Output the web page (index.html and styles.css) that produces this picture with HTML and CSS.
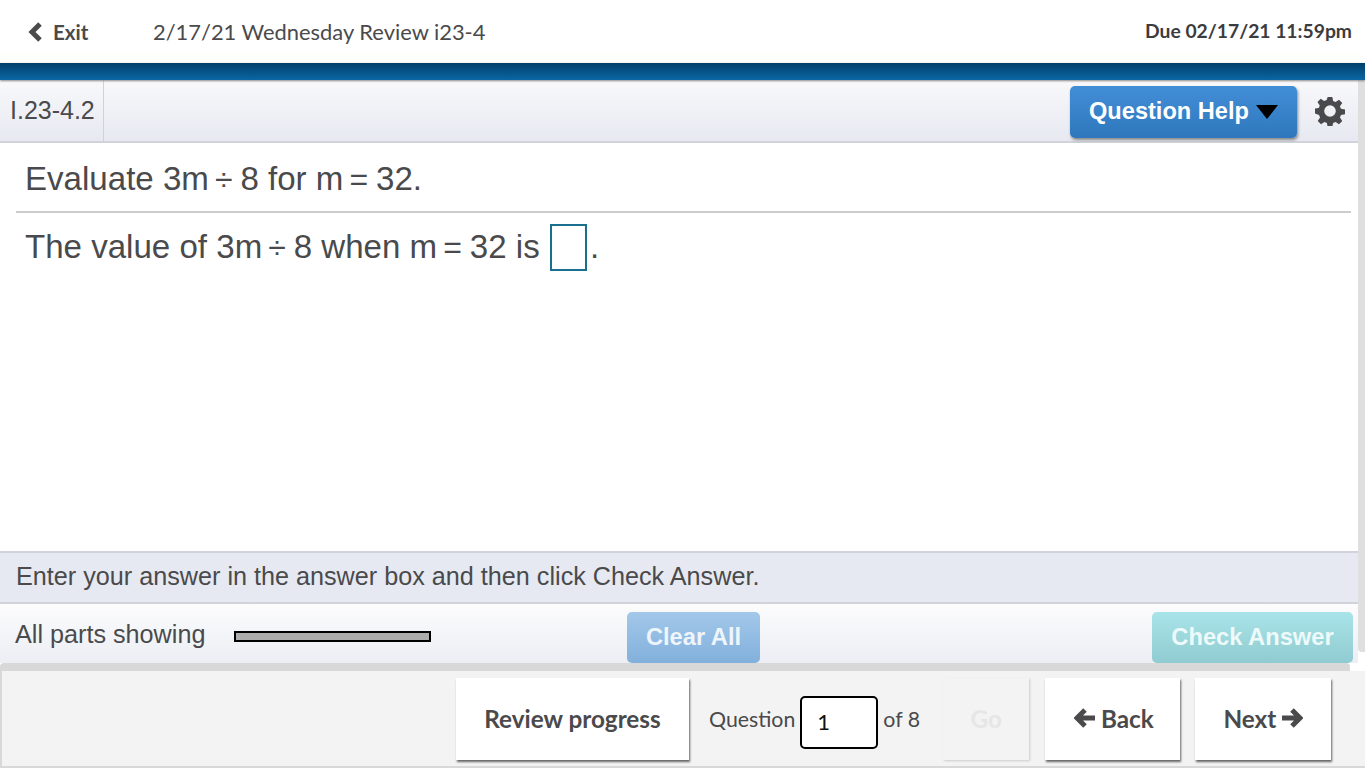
FILE: index.html
```html
<!DOCTYPE html>
<html lang="en">
<head>
<meta charset="utf-8">
<title>2/17/21 Wednesday Review i23-4</title>
<link rel="stylesheet" href="styles.css">
</head>
<body>
<div class="page">
  <header class="topbar">
    <a class="exit">
      <svg class="chev" viewBox="0 0 14 20" width="14" height="20"><path d="M12 2 4 10l8 8" fill="none" stroke="#4a4a4c" stroke-width="5"/></svg>
      <span>Exit</span>
    </a>
    <div class="title">2/17/21 Wednesday Review i23-4</div>
    <div class="due">Due 02/17/21 11:59pm</div>
  </header>
  <div class="band"></div>
  <div class="workspace">
    <div class="content">
      <div class="toolbar">
        <div class="qid">I.23-4.2</div>
        <button class="help">Question Help<span class="caret"></span></button>
        <svg class="gear" viewBox="0 0 32 32" width="30" height="30"><path fill="#4a4a4c" fill-rule="evenodd" d="M13.500 1h5l.8 4.300 2.700 1.100 3.600-2.500 3.500 3.500-2.500 3.600 1.100 2.700 4.300.8v5l-4.300.8-1.100 2.700 2.500 3.600-3.500 3.500-3.600-2.500-2.700 1.100-.8 4.300h-5l-.8-4.300-2.700-1.100-3.600 2.500-3.500-3.500 2.500-3.600-1.100-2.700L-.3 18.500v-5l4.300-.8 1.100-2.700-2.500-3.600 3.500-3.500 3.600 2.500 2.700-1.100zM16 9.800a6.200 6.200 0 1 0 0 12.400 6.200 6.200 0 0 0 0-12.400z"/></svg>
      </div>
      <main class="question">
        <p class="prompt">Evaluate 3m<span class="op">÷</span>8 for m<span class="op">=</span>32.</p>
        <p class="answer">The value of 3m<span class="op">÷</span>8 when m<span class="op">=</span>32 is <span class="box"></span>.</p>
      </main>
      <div class="hint">Enter your answer in the answer box and then click Check Answer.</div>
      <div class="controls">
        <div class="parts">All parts showing</div>
        <div class="progress"></div>
        <button class="clear">Clear All</button>
        <button class="check">Check Answer</button>
      </div>
    </div>
    <div class="scroll"></div>
  </div>
  <div class="strip"></div>
  <footer class="footer">
    <button class="nav review">Review progress</button>
    <span class="qlabel">Question</span>
    <div class="qinput">1</div>
    <span class="qof">of 8</span>
    <button class="nav go">Go</button>
    <button class="nav back"><svg viewBox="0 0 21 20" width="21" height="20"><path d="M11 2 3 10l8 8M5 10h16" fill="none" stroke="#4a4a4c" stroke-width="5"/></svg>Back</button>
    <button class="nav next">Next<svg viewBox="0 0 21 20" width="21" height="20"><path d="M10 2l8 8-8 8M16 10H0" fill="none" stroke="#4a4a4c" stroke-width="5"/></svg></button>
  </footer>
</div>
</body>
</html>
```
FILE: styles.css
```css
* { box-sizing: border-box; }
html, body { margin: 0; padding: 0; }
body { background: #fff; font-family: "Liberation Sans", Arial, sans-serif; color: #4a4a4c; overflow: hidden; }
button { font: inherit; border: 0; cursor: pointer; }
p { margin: 0; }
.page { width: 1365px; height: 768px; display: flex; flex-direction: column; }

.topbar { height: 63px; display: flex; align-items: center; padding: 0 13px 0 28px; font-family: Lato, sans-serif; background: linear-gradient(#fff 80%, #fdfdfa); }
.exit { display: flex; align-items: center; gap: 11px; font-size: 20.500px; font-weight: 700; width: 125px; }
.chev { display: block; }
.title { font-size: 21.900px; flex: 1; padding-bottom: 1px; }
.due { font-size: 19.300px; font-weight: 700; color: #3c3c3e; padding-bottom: 2px; }
.band { height: 17px; background: linear-gradient(#003f6b, #0a67a4); box-shadow: 0 1px 2px #888; position: relative; }

.workspace { height: 583px; display: flex; align-items: stretch; }
.content { width: 1358px; display: flex; flex-direction: column; }
.scroll { width: 7px; height: 572px; background: #dfdfdf; border-radius: 0 0 0 4px; }

.toolbar { height: 63px; flex: none; display: flex; align-items: flex-start; padding-right: 13px; background: linear-gradient(#f9f9fb, #e6e9f1); border-bottom: 2px solid #d0d3da; }
.qid { height: 61px; width: 104px; padding-left: 10px; line-height: 61px; font-size: 25px; border-right: 1px solid #d0d2d8; margin-right: auto; }
.help { width: 227px; height: 52px; margin-top: 6px; background: linear-gradient(#428ed6, #2e77bd); color: #fff; font-weight: 700; font-size: 23.600px; border-radius: 5px; box-shadow: 1px 2px 3px #888; display: flex; align-items: center; padding: 0 0 2px 19px; }
.caret { width: 0; height: 0; border-left: 11px solid transparent; border-right: 11px solid transparent; border-top: 14px solid #000; margin: 2px 0 0 7px; }
.gear { margin: 16px 0 0 18px; }

.question { flex: 1; padding: 0 7px 0 16px; }
.prompt { height: 70px; border-bottom: 2px solid #ccc; padding-left: 9px; font-size: 33.100px; line-height: 71px; }
.answer { padding-left: 9px; font-size: 33.100px; line-height: 68px; display: flex; align-items: center; white-space: pre; }
.op { margin: 0 8px 0 6px; font-size: 32px; }
.box { width: 37px; height: 47px; border: 2px solid #1b6f8e; margin: 0 3px 0 1px; }

.hint { height: 53px; flex: none; background: #e6e9f1; border-top: 2px solid #d0d3da; border-bottom: 2px solid #d0d3da; padding-left: 16px; font-size: 25.200px; line-height: 47px; }
.controls { height: 59px; flex: none; display: flex; align-items: flex-start; background: linear-gradient(#fcfcfd, #eceef4); padding: 8px 5px 0 15px; }
.parts { width: 219px; font-size: 25.200px; line-height: 45px; }
.progress { width: 197px; height: 11px; margin-top: 19px; background: #adadad; border: 2px solid #000; }
.clear { width: 133px; height: 51px; margin-left: 196px; background: linear-gradient(#a3c8e9, #82b0dc); color: #eef5fb; font-weight: 700; font-size: 23.700px; border-radius: 5px; }
.check { width: 201px; height: 51px; margin-left: auto; background: linear-gradient(#a8e4e8, #8fcbd0); color: #eefafa; font-weight: 700; font-size: 23.700px; border-radius: 5px; }

.strip { height: 8px; width: 1350px; background: #d8d8d8; border-radius: 4px 4px 0 0; }
.footer { height: 97px; background: #f3f3f3; border: 2px solid #d8d8d8; border-width: 0 0 2px 2px; display: flex; align-items: flex-start; padding: 7px 0 0 454px; font-family: Lato, sans-serif; font-size: 24px; }
.nav { height: 82px; background: #fff; color: #4a4a4c; font-weight: 700; font-size: 24.300px; box-shadow: 1px 2px 2px #666; display: flex; align-items: center; justify-content: center; gap: 6px; padding: 0 0 2px; }
.review { width: 233px; }
.qlabel { margin-left: 20px; line-height: 82px; font-size: 21.300px; }
.qinput { width: 78px; height: 53px; margin: 18px 5px 0; border: 2px solid #000; border-radius: 5px; background: #fff; color: #111; padding: 11px 0 0 15px; font-size: 22px; line-height: 26px; }
.qof { line-height: 82px; font-size: 21.300px; width: 38px; }
.go { width: 86px; margin-left: 22px; background: #f3f3f3; color: #e6e6e6; box-shadow: 1px 1px 2px #ccc; }
.back { width: 135px; margin-left: 16px; padding-left: 2px; }
.next { width: 136px; margin-left: 15px; }
```
